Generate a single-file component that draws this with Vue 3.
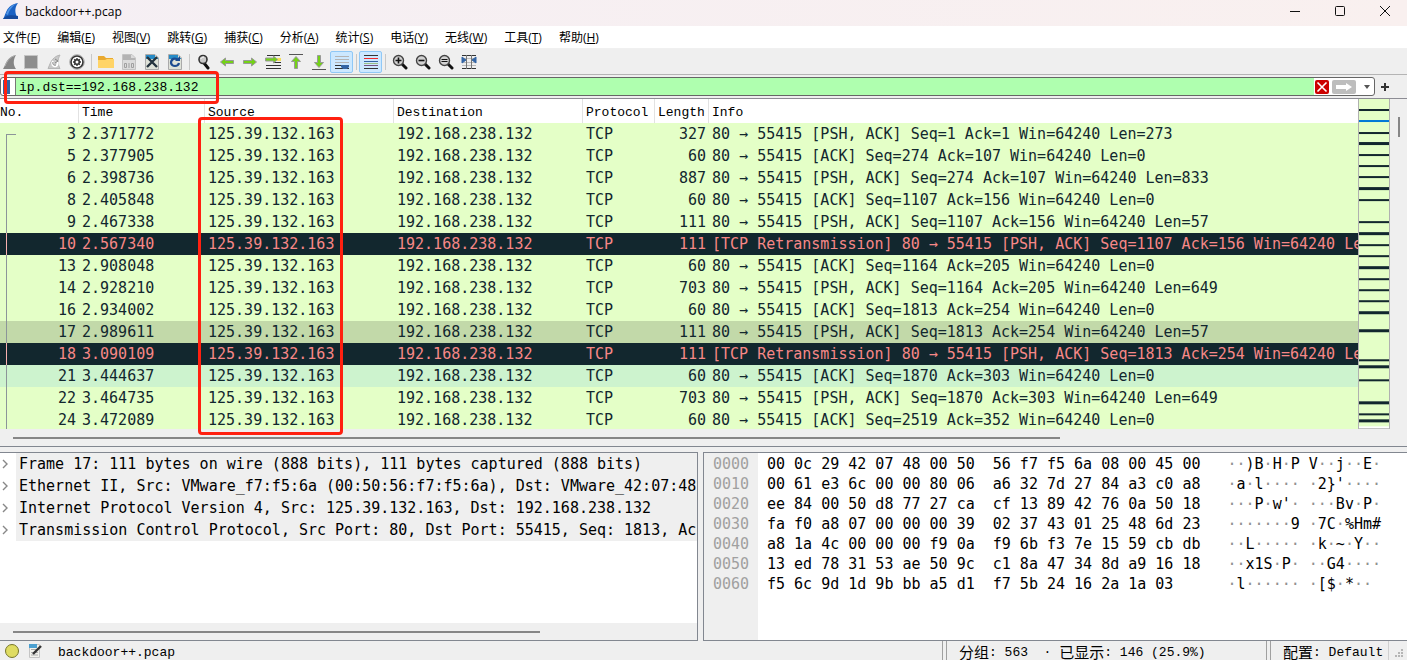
<script setup>
import { ref } from 'vue'

const filter = ref('ip.dst==192.168.238.132')

const menus = [
  ['文件', 'F'], ['编辑', 'E'], ['视图', 'V'], ['跳转', 'G'], ['捕获', 'C'], ['分析', 'A'],
  ['统计', 'S'], ['电话', 'Y'], ['无线', 'W'], ['工具', 'T'], ['帮助', 'H'],
]

const tools = [
  'start', 'stop', 'restart', 'options', '|', 'open', 'save', 'close', 'reload', '|',
  'find', 'back', 'forward', 'goto', 'first', 'last', 'autoscroll', '|', 'colorize', '|',
  'zoomin', 'zoomout', 'zoomreset', 'columns',
]
const checked = ['autoscroll', 'colorize']

const src = '125.39.132.163'
const dst = '192.168.238.132'
const packets = [
  [3, '2.371772', 327, '80 → 55415 [PSH, ACK] Seq=1 Ack=1 Win=64240 Len=273', 'head'],
  [5, '2.377905', 60, '80 → 55415 [ACK] Seq=274 Ack=107 Win=64240 Len=0', ''],
  [6, '2.398736', 887, '80 → 55415 [PSH, ACK] Seq=274 Ack=107 Win=64240 Len=833', ''],
  [8, '2.405848', 60, '80 → 55415 [ACK] Seq=1107 Ack=156 Win=64240 Len=0', ''],
  [9, '2.467338', 111, '80 → 55415 [PSH, ACK] Seq=1107 Ack=156 Win=64240 Len=57', ''],
  [10, '2.567340', 111, '[TCP Retransmission] 80 → 55415 [PSH, ACK] Seq=1107 Ack=156 Win=64240 Le', 'bad'],
  [13, '2.908048', 60, '80 → 55415 [ACK] Seq=1164 Ack=205 Win=64240 Len=0', ''],
  [14, '2.928210', 703, '80 → 55415 [PSH, ACK] Seq=1164 Ack=205 Win=64240 Len=649', ''],
  [16, '2.934002', 60, '80 → 55415 [ACK] Seq=1813 Ack=254 Win=64240 Len=0', ''],
  [17, '2.989611', 111, '80 → 55415 [PSH, ACK] Seq=1813 Ack=254 Win=64240 Len=57', 'selected'],
  [18, '3.090109', 111, '[TCP Retransmission] 80 → 55415 [PSH, ACK] Seq=1813 Ack=254 Win=64240 Le', 'bad'],
  [21, '3.444637', 60, '80 → 55415 [ACK] Seq=1870 Ack=303 Win=64240 Len=0', 'hover'],
  [22, '3.464735', 703, '80 → 55415 [PSH, ACK] Seq=1870 Ack=303 Win=64240 Len=649', ''],
  [24, '3.472089', 60, '80 → 55415 [ACK] Seq=2519 Ack=352 Win=64240 Len=0', ''],
]

const marks = [
  [10, 2], [33, 2], [43, 3], [55, 2], [66, 2], [77, 2], [88, 3], [100, 2], [122, 2], [133, 3],
  [145, 2], [156, 2], [167, 3], [179, 2], [190, 2], [201, 2], [212, 3], [230, 3], [260, 2],
  [266, 3], [280, 2], [302, 3], [314, 2], [320, 3],
]

const details = [
  'Frame 17: 111 bytes on wire (888 bits), 111 bytes captured (888 bits)',
  'Ethernet II, Src: VMware_f7:f5:6a (00:50:56:f7:f5:6a), Dst: VMware_42:07:48',
  'Internet Protocol Version 4, Src: 125.39.132.163, Dst: 192.168.238.132',
  'Transmission Control Protocol, Src Port: 80, Dst Port: 55415, Seq: 1813, Ack',
]

const hex = [
  ['0000', '00 0c 29 42 07 48 00 50  56 f7 f5 6a 08 00 45 00', '··)B·H·P V··j··E·'],
  ['0010', '00 61 e3 6c 00 00 80 06  a6 32 7d 27 84 a3 c0 a8', "·a·l···· ·2}'····"],
  ['0020', 'ee 84 00 50 d8 77 27 ca  cf 13 89 42 76 0a 50 18', "···P·w'· ···Bv·P·"],
  ['0030', 'fa f0 a8 07 00 00 00 39  02 37 43 01 25 48 6d 23', '·······9 ·7C·%Hm#'],
  ['0040', 'a8 1a 4c 00 00 00 f9 0a  f9 6b f3 7e 15 59 cb db', '··L····· ·k·~·Y··'],
  ['0050', '13 ed 78 31 53 ae 50 9c  c1 8a 47 34 8d a9 16 18', '··x1S·P· ··G4····'],
  ['0060', 'f5 6c 9d 1d 9b bb a5 d1  f7 5b 24 16 2a 1a 03', '·l······ ·[$·*··'],
]
const runs = (s) => s.match(/·+|[^·]+/g)
</script>

<template>
  <div class="window">
    <header class="title">
      <svg class="logo" viewBox="0 0 16 18" width="16" height="18">
        <path d="M0 17C3 14 2 3 15 1C11 6 12 12 15 17Z" fill="#1b62c4" />
        <path d="M3 12C5 7 8 3 13 2C10 4 6 8 5 13Z" fill="#4f93e4" />
        <path d="M0 17H15V14C10 13 5 13 2 15Z" fill="#164a9c" />
      </svg>
      <span class="name">backdoor++.pcap</span>
      <button class="win" aria-label="Minimize"><svg width="12" height="12"><path d="M1 6.500H11" /></svg></button>
      <button class="win" aria-label="Maximize"><svg width="12" height="12"><rect x="1.500" y="1.500" width="9" height="9" rx="1" /></svg></button>
      <button class="win" aria-label="Close"><svg width="12" height="12"><path d="M1 1L11 11M11 1L1 11" /></svg></button>
    </header>

    <nav class="menu">
      <button v-for="m in menus" :key="m[1]">{{ m[0] }}(<u>{{ m[1] }}</u>)</button>
    </nav>

    <div class="toolbar">
      <template v-for="(t, i) in tools" :key="i">
        <i v-if="t === '|'" class="sep"></i>
        <button v-else class="tool" :class="{ on: checked.includes(t), first: i === 0 }" :aria-label="t">
          <svg viewBox="0 0 16 16" width="16" height="16" fill="none">
            <template v-if="t === 'start'">
              <path d="M1 15C4 11 4 3 14 1C11 6 11 11 14 15Z" fill="#858585" />
              <path d="M3 12C5 7 8 3 12 2" stroke="#b5b5b5" />
            </template>
            <rect v-else-if="t === 'stop'" x="1.500" y="1.500" width="13" height="13" fill="#8d8d8d" stroke="#c4c4c4" />
            <template v-else-if="t === 'restart'">
              <path d="M2 14.500C4 11 5 3 14 1C11 6 12 11 14 14.500Z" fill="#c9c9c9" stroke="#b5b5b5" />
              <path d="M7 7C5 10 7 13 10 12C12 11 12 9 11 8" stroke="#fff" stroke-width="2" />
              <path d="M7 8C6 10 8 12 10 11M9 5L12 7L9 9" stroke="#888" />
            </template>
            <template v-else-if="t === 'options'">
              <circle cx="8" cy="8" r="7.300" stroke="#aaa" />
              <circle cx="8" cy="8" r="6" fill="#fff" stroke="#333" stroke-width="1.600" />
              <circle cx="8" cy="8" r="3" fill="#333" />
              <path d="M8 4V12M4 8H12M5.200 5.200L10.800 10.800M10.800 5.200L5.200 10.800" stroke="#333" stroke-width="1.400" />
              <circle cx="8" cy="8" r="1.500" fill="#fff" />
            </template>
            <template v-else-if="t === 'open'">
              <path d="M0 2H6L8 4H15V14H0Z" fill="#e9a92f" />
              <path d="M0 6H7L9 5H16V14H0Z" fill="#ffd467" />
            </template>
            <template v-else-if="t === 'save'">
              <path d="M1.500 0.500H11L14.500 4V15.500H1.500Z" fill="#dcdcdc" stroke="#c4c4c4" />
              <path d="M2 1H10V4H14V6H2Z" fill="#b4b4b4" />
              <path d="M3.500 9.500H5.500V13.500H3.500ZM8 9V14M10.500 9.500H12.500V13.500H10.500Z" stroke="#a0a0a0" />
            </template>
            <template v-else-if="t === 'close'">
              <path d="M1.500 0.500H11L14.500 4V15.500H1.500Z" fill="#dfe2d9" stroke="#aaa" />
              <path d="M2 1H11V4H14V5H2Z" fill="#278bc6" />
              <path d="M3 3L13 13M13 3L3 13" stroke="#24333e" stroke-width="2.400" />
            </template>
            <template v-else-if="t === 'reload'">
              <path d="M1.500 0.500H11L14.500 4V15.500H1.500Z" fill="#dfe2d9" stroke="#aaa" />
              <path d="M2 1H11V4H14V5H2Z" fill="#278bc6" />
              <path d="M11 6C8 3 4 5 4 9C5 13 11 13 12 9" stroke="#1c4b91" stroke-width="2.200" />
              <path d="M8 7H13V2Z" fill="#1c4b91" />
            </template>
            <template v-else-if="t === 'find'">
              <path d="M8 9L12 14" stroke="#111" stroke-width="3" stroke-linecap="round" />
              <circle cx="7" cy="5.500" r="4" fill="#c8c8c8" stroke="#333" stroke-width="1.600" />
              <path d="M5 5C5 4 6 3 8 3" stroke="#fff" />
            </template>
            <path v-else-if="t === 'back'" class="arrow" d="M1.500 8L6.500 4V6.500H14.500V9.500H6.500V12Z" />
            <path v-else-if="t === 'forward'" class="arrow" d="M14.500 8L9.500 4V6.500H1.500V9.500H9.500V12Z" />
            <template v-else-if="t === 'goto'">
              <path d="M2 1.500H15M9 8.500H16M1 11.500H16M1 14.500H16" stroke="#333" />
              <path d="M12 4H16V7H12Z" fill="#f4df5c" />
              <path class="arrow" d="M12.500 5.500L8.500 2V4H0.500V7H8.500V9Z" />
            </template>
            <template v-else-if="t === 'first'">
              <path d="M1 0.500H15" stroke="#555" />
              <path class="arrow" d="M8 2.500L12.500 7.500H9.500V14.500H6.500V7.500H3.500Z" />
            </template>
            <template v-else-if="t === 'last'">
              <path d="M1 15.500H15" stroke="#555" />
              <path class="arrow" d="M8 13.500L12.500 8.500H9.500V1.500H6.500V8.500H3.500Z" />
            </template>
            <template v-else-if="t === 'autoscroll'">
              <path d="M1 2.500H15M1 5.500H15M1 8.500H15" stroke="#b4b4b4" />
              <path d="M1 11.500H15M1 14.500H15" stroke="#333" />
              <path d="M7 11H15V13L13 15H9L7 13Z" fill="#3465a4" />
            </template>
            <template v-else-if="t === 'colorize'">
              <path d="M1 1.500H15M1 14.500H15" stroke="#333" />
              <path d="M1 4.500H15" stroke="#ef2929" />
              <path d="M1 7.500H15" stroke="#3465a4" />
              <path d="M1 9.500H15" stroke="#9ac08a" />
              <path d="M1 11.500H15" stroke="#75507b" />
            </template>
            <template v-else-if="t.startsWith('zoom')">
              <path d="M10 10L14 14" stroke="#111" stroke-width="3" stroke-linecap="round" />
              <circle cx="6.500" cy="6.500" r="5" fill="#d2d2d2" stroke="#444" stroke-width="1.400" />
              <path v-if="t === 'zoomin'" d="M3.500 6.500H9.500M6.500 3.500V9.500" stroke="#111" stroke-width="1.600" />
              <path v-else-if="t === 'zoomout'" d="M3.500 6.500H9.500" stroke="#111" stroke-width="1.600" />
              <path v-else d="M3.500 5.500H9.500M3.500 7.500H9.500" stroke="#111" />
            </template>
            <template v-else>
              <path d="M1 1.500H15M1 14.500H15" stroke="#333" />
              <path d="M1 4.500H15M1 8.500H15M1 11.500H15" stroke="#bbb" />
              <path d="M5.500 1V15M10.500 1V15" stroke="#777" />
              <path d="M1 3L5 6L1 9ZM15 3L11 6L15 9Z" fill="#3465a4" stroke="#3465a4" />
            </template>
          </svg>
        </button>
      </template>
    </div>

    <div class="filterbar">
      <div class="filter">
        <button class="bookmark" aria-label="Bookmark"></button>
        <input v-model="filter" aria-label="Display filter" spellcheck="false" />
        <button class="clear" aria-label="Clear">
          <svg width="14" height="14"><path d="M2.500 2.500L11.500 11.500M11.500 2.500L2.500 11.500" stroke="#fff" stroke-width="1.600" /></svg>
        </button>
        <button class="apply" aria-label="Apply">
          <svg width="24" height="14"><path d="M4 5H14V3L20 7L14 11V9H4Z" fill="#fff" /></svg>
        </button>
        <button class="drop" aria-label="History"><svg width="6" height="4"><path d="M0 0H6L3 4Z" fill="#555" /></svg></button>
      </div>
      <button class="plus" aria-label="Add filter"><svg width="8" height="8"><path d="M4 0V8M0 4H8" stroke="#333" stroke-width="2" /></svg></button>
      <span class="mark mark-filter"></span>
    </div>

    <main class="main">
      <section class="list">
        <div class="list-row">
          <div class="table-wrap">
            <table>
              <colgroup><col class="c1" /><col class="c2" /><col class="c3" /><col class="c4" /><col class="c5" /><col class="c6" /><col /></colgroup>
              <thead>
                <tr><th class="no">No.</th><th>Time</th><th>Source</th><th>Destination</th><th>Protocol</th><th>Length</th><th>Info</th></tr>
              </thead>
              <tbody>
                <tr v-for="p in packets" :key="p[0]" :class="p[4]">
                  <td class="num line">{{ p[0] }}</td>
                  <td>{{ p[1] }}</td>
                  <td>{{ src }}</td>
                  <td>{{ dst }}</td>
                  <td>TCP</td>
                  <td class="num">{{ p[2] }}</td>
                  <td>{{ p[3] }}</td>
                </tr>
              </tbody>
            </table>
          </div>
          <svg class="minimap" viewBox="0 0 32 330" preserveAspectRatio="none">
            <rect width="32" height="330" fill="#fff" />
            <rect width="32" height="327" fill="#e4ffc7" />
            <rect v-for="m in marks" :key="m[0]" :y="m[0]" width="32" :height="m[1]" fill="#12272e" />
            <rect y="21" width="32" height="2" fill="#0078d7" />
            <path d="M0.500 0V329.500H31.500V0" fill="none" stroke="#b0b0b0" />
          </svg>
          <div class="vscroll"><i></i></div>
        </div>
        <div class="hscroll"><i class="wide"></i></div>
        <span class="mark mark-source"></span>
      </section>

      <div class="panes">
        <section class="details">
          <ul>
            <li v-for="d in details" :key="d">
              <svg width="16" height="10"><path d="M3 1L7 5L3 9" fill="none" stroke="#888" stroke-width="1.400" /></svg>
              <span>{{ d }}</span>
            </li>
          </ul>
          <div class="hscroll"><i class="half"></i></div>
        </section>
        <section class="bytes">
          <div class="offsets"><div v-for="h in hex" :key="h[0]">{{ h[0] }}</div></div>
          <div class="hex"><div v-for="h in hex" :key="h[0]">{{ h[1] }}</div></div>
          <div class="ascii">
            <div v-for="h in hex" :key="h[0]"><span v-for="(r, i) in runs(h[2])" :key="i" :class="{ dim: r[0] === '·' }">{{ r }}</span></div>
          </div>
        </section>
      </div>
    </main>

    <footer class="status">
      <button class="expert" aria-label="Expert info"></button>
      <button class="comment" aria-label="Comment">
        <svg width="16" height="14" fill="none">
          <path d="M1.500 0.500H11.500V13.500H1.500Z" fill="#f2f2ec" stroke="#c4c4c4" />
          <path d="M1 0H9V4H1Z" fill="#4a9fd0" />
          <path d="M3 5.500H8M3 8.500H10M3 11H10" stroke="#aaa" />
          <path d="M5 10L13 2" stroke="#333" stroke-width="2.400" />
        </svg>
      </button>
      <span class="file">backdoor++.pcap</span>
      <span class="cell counts"><b>分组</b>: 563 &nbsp;· <b>已显示</b>: 146 (25.9%)</span>
      <span class="cell profile"><b>配置</b>: Default</span>
      <svg class="grip" width="16" height="16" fill="#b5b5b5">
        <path d="M10 6h2v2h-2zM7 9h2v2h-2zM10 9h2v2h-2zM4 12h2v2h-2zM7 12h2v2h-2zM10 12h2v2h-2z" />
      </svg>
    </footer>
  </div>
</template>

<style>
body {
  margin: 0;
  background: #efefef;
}
</style>

<style scoped>
* {
  box-sizing: border-box;
}
.window {
  display: flex;
  flex-direction: column;
  height: 100vh;
  overflow: hidden;
  background: #efefef;
  color: #000;
  font: 13px "Liberation Mono", "Noto Sans CJK SC", monospace;
}
button {
  display: flex;
  align-items: center;
  justify-content: center;
  flex: none;
  margin: 0;
  padding: 0;
  border: 0;
  background: none;
  color: inherit;
  font: inherit;
}
.title {
  display: flex;
  align-items: center;
  flex: none;
  height: 26px;
  padding: 0 0 4px 3px;
  background: linear-gradient(90deg, #f5eff4, #f9f0ef);
}
.name {
  flex: 1;
  margin-left: 6px;
  font: 12px "Open Sans", "Noto Sans", sans-serif;
}
.win {
  width: 45px;
  height: 20px;
}
.win svg {
  fill: none;
  stroke: #111;
}
.menu {
  display: flex;
  flex: none;
  gap: 17px;
  height: 23px;
  padding-left: 3px;
  border-bottom: 1px solid #f0f0f0;
  background: #fff;
}
.menu button {
  font: 12px "Open Sans", "Noto Sans CJK SC", sans-serif;
}
.toolbar {
  display: flex;
  align-items: center;
  flex: none;
  height: 26px;
  border-bottom: 1px solid #b4b4b4;
}
.tool {
  width: 23px;
  height: 22px;
}
.tool.first {
  width: 19px;
}
.tool.on {
  border: 1px solid #90c8f6;
  border-radius: 2px;
  background: #cce8ff;
}
.arrow {
  fill: #73d216;
  stroke: #999;
  stroke-width: 1;
}
.sep {
  width: 6px;
  height: 16px;
  background: linear-gradient(#c8c8c8, #c8c8c8) 3px 0 / 1px 100% no-repeat;
}
.filterbar {
  position: relative;
  display: flex;
  align-items: center;
  flex: none;
  height: 24px;
  border-bottom: 1px solid #8c8c94;
}
.filter {
  display: flex;
  align-items: center;
  flex: 1;
  height: 19px;
  border: 1px solid #666;
  border-radius: 3px;
  background: #fff;
}
.bookmark {
  width: 7px;
  height: 14px;
  margin: 0 5px 0 2px;
  background: #3465a4;
}
.filter input {
  flex: 1;
  min-width: 0;
  height: 17px;
  padding: 2px 3px 0;
  border: 0;
  border-left: 1px solid #777;
  outline: 0;
  background: #afffaf;
  color: #000;
  font: 13px "Liberation Mono", monospace;
}
.clear {
  width: 14px;
  height: 14px;
  margin-left: 1px;
  border-radius: 2px;
  background: #c00;
}
.apply {
  width: 24px;
  height: 14px;
  margin-left: 3px;
  border-radius: 2px;
  background: #bdbdbd;
}
.drop {
  width: 18px;
  height: 17px;
  padding-left: 4px;
}
.plus {
  width: 20px;
  height: 20px;
  margin-right: 12px;
}
.mark {
  position: absolute;
  z-index: 2;
  border: 3px solid #ff2010;
  border-radius: 4px;
  pointer-events: none;
}
.mark-filter {
  left: 4px;
  top: -4px;
  width: 215px;
  height: 33px;
}
.mark-source {
  left: 198px;
  top: 18px;
  width: 145px;
  height: 318px;
}
.main {
  display: flex;
  flex-direction: column;
  flex: 1;
  gap: 5px;
  min-height: 0;
}
.list {
  position: relative;
  display: flex;
  flex-direction: column;
  flex: 348 1 0;
  min-height: 0;
  border-bottom: 1px solid #828790;
}
.list-row {
  display: flex;
  flex: 1;
  min-height: 0;
}
.table-wrap {
  flex: 1;
  min-width: 0;
  overflow: hidden;
  background: #fff;
}
table {
  width: 100%;
  border-collapse: separate;
  border-spacing: 0;
  table-layout: fixed;
}
.c1 { width: 79px; }
.c2 { width: 126px; }
.c3 { width: 189px; }
.c4 { width: 189px; }
.c5 { width: 72px; }
.c6 { width: 54px; }
th {
  height: 24px;
  padding: 3px 0 0 3px;
  border-right: 1px solid #e2e2e2;
  overflow: hidden;
  font-weight: 400;
  line-height: 21px;
  text-align: left;
  white-space: nowrap;
}
th:last-child {
  border-right: 0;
}
th.no {
  padding-left: 0;
}
td {
  height: 22px;
  padding: 0 0 0 3px;
  overflow: hidden;
  color: #12272e;
  font: 15px "DejaVu Sans Mono", monospace;
  line-height: 22px;
  white-space: nowrap;
}
td.num {
  padding: 0 3px 0 0;
  text-align: right;
}
tbody tr {
  background: #e4ffc7;
}
tbody .selected {
  background: #c2d9a9;
}
tbody .hover {
  background: #cdf3ce;
}
tbody .bad {
  background: #12272e;
}
.bad td {
  color: #f78787;
}
.line {
  background: linear-gradient(#8c9599, #8c9599) 6px 0 / 1px 100% no-repeat;
}
.bad .line {
  background-image: linear-gradient(#f7b0b0, #f7b0b0);
}
.head .line {
  background:
    linear-gradient(#8c9599, #8c9599) 6px 11px / 1px 11px no-repeat,
    linear-gradient(#8c9599, #8c9599) 6px 11px / 10px 1px no-repeat;
}
.minimap {
  flex: none;
  width: 32px;
  height: 100%;
}
.vscroll {
  flex: none;
  width: 17px;
  padding: 18px 0 0 8px;
}
.vscroll i {
  display: block;
  width: 2px;
  height: 20px;
  background: #868686;
}
.hscroll {
  display: flex;
  flex: none;
  height: 17px;
  padding: 8px 17px 0 13px;
  background: #efefef;
}
.hscroll i {
  height: 2px;
  background: #868686;
}
.hscroll .wide {
  width: 76%;
}
.hscroll .half {
  width: 79%;
}
.panes {
  display: grid;
  grid-template-columns: 698fr 704fr;
  flex: 189 1 0;
  gap: 5px;
  min-height: 0;
}
.details {
  display: flex;
  flex-direction: column;
  min-width: 0;
  border: solid #828790;
  border-width: 1px 1px 1px 0;
  background: #fff;
}
ul {
  flex: 1;
  margin: 0;
  padding: 0;
  list-style: none;
}
li {
  display: flex;
  align-items: center;
  height: 22px;
  font: 15px "DejaVu Sans Mono", monospace;
  line-height: 22px;
}
li svg {
  flex: none;
}
li span {
  flex: 1;
  min-width: 0;
  padding-left: 3px;
  overflow: hidden;
  background: #efefef;
  white-space: pre;
}
.bytes {
  display: flex;
  min-width: 0;
  border: solid #828790;
  border-width: 1px 0 1px 1px;
  background: #fff;
  font: 15px "DejaVu Sans Mono", monospace;
  line-height: 20px;
  white-space: pre;
}
.offsets {
  width: 54px;
  padding: 1px 0 0 9px;
  background: #efefef;
  color: #a0a0a0;
}
.hex {
  padding: 1px 27px 0 9px;
}
.ascii {
  padding-top: 1px;
}
.dim {
  color: #909090;
}
.status {
  display: flex;
  align-items: center;
  flex: none;
  height: 19px;
  padding-left: 5px;
  line-height: 19px;
  white-space: pre;
}
.expert {
  width: 14px;
  height: 14px;
  border: 1px solid #77772c;
  border-radius: 50%;
  background: #dfdc62;
}
.comment {
  margin: 0 14px 0 9px;
}
.file {
  flex: 1;
  padding-top: 4px;
}
.cell {
  display: flex;
  align-items: center;
  height: 19px;
  padding: 4px 0 0 16px;
  border-left: 1px solid #a0a0a0;
  background: linear-gradient(#a0a0a0, #a0a0a0) 3px 0 / 1px 100% no-repeat;
}
.cell b {
  margin-bottom: 2px;
  font: 15px "Noto Sans CJK SC", sans-serif;
  line-height: 15px;
}
.counts {
  width: 324px;
}
.profile {
  width: 123px;
  border-right: 1px solid #d0d0d0;
}
.grip {
  margin-left: 2px;
}
</style>
